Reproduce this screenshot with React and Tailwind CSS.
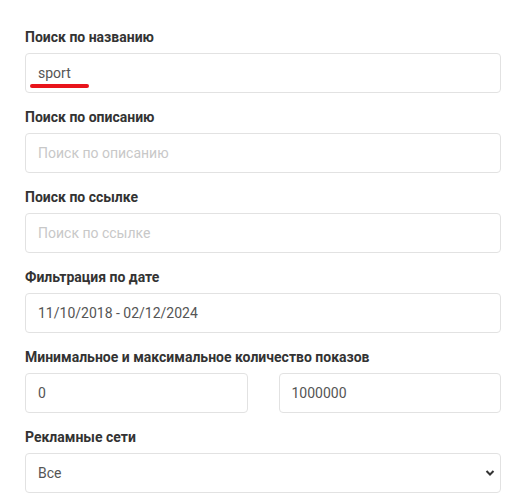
import React from 'react';

const font = { fontFamily: 'Roboto, "Liberation Sans", sans-serif' };

const Label = ({ children }) => (
  <label className="block text-[14px] leading-[20px] font-bold text-[#333] mb-[6px]">{children}</label>
);

const inputCls =
  'block w-full h-[40px] px-[12px] border border-[#e2e2e2] rounded-[4px] bg-white text-[14px] text-[#555] placeholder:text-[#c8c8c8] outline-none';

export default function App() {
  return (
    <div className="min-h-[499px] bg-white px-[25px] pt-[27px]" style={font}>
      <div className="w-[476px]">
        <div className="mb-[14px]">
          <Label>Поиск по названию</Label>
          <div className="relative">
            <input className={inputCls} defaultValue="sport" />
            {/* red underline annotation */}
            <span className="absolute left-[5px] top-[31px] w-[59px] h-[4px] rounded-full bg-[#e8141b]" />
          </div>
        </div>
        <div className="mb-[14px]">
          <Label>Поиск по описанию</Label>
          <input className={inputCls} placeholder="Поиск по описанию" />
        </div>
        <div className="mb-[14px]">
          <Label>Поиск по ссылке</Label>
          <input className={inputCls} placeholder="Поиск по ссылке" />
        </div>
        <div className="mb-[14px]">
          <Label>Фильтрация по дате</Label>
          <input className={inputCls} defaultValue="11/10/2018 - 02/12/2024" />
        </div>
        <div className="mb-[14px]">
          <Label>Минимальное и максимальное количество показов</Label>
          <div className="grid grid-cols-2 gap-[31px]">
            <input className={inputCls} defaultValue="0" />
            <input className={inputCls} defaultValue="1000000" />
          </div>
        </div>
        <div>
          <Label>Рекламные сети</Label>
          <div className="relative">
            <select className={inputCls + ' appearance-none'} defaultValue="all">
              <option value="all">Все</option>
            </select>
            <svg
              className="absolute right-[6px] top-[15px] w-[10px] h-[10px] pointer-events-none"
              viewBox="0 0 10 10"
              fill="none"
              stroke="#333"
              strokeWidth="2"
            >
              <path d="M1.5 3l3.5 3.5L8.5 3" />
            </svg>
          </div>
        </div>
      </div>
    </div>
  );
}
